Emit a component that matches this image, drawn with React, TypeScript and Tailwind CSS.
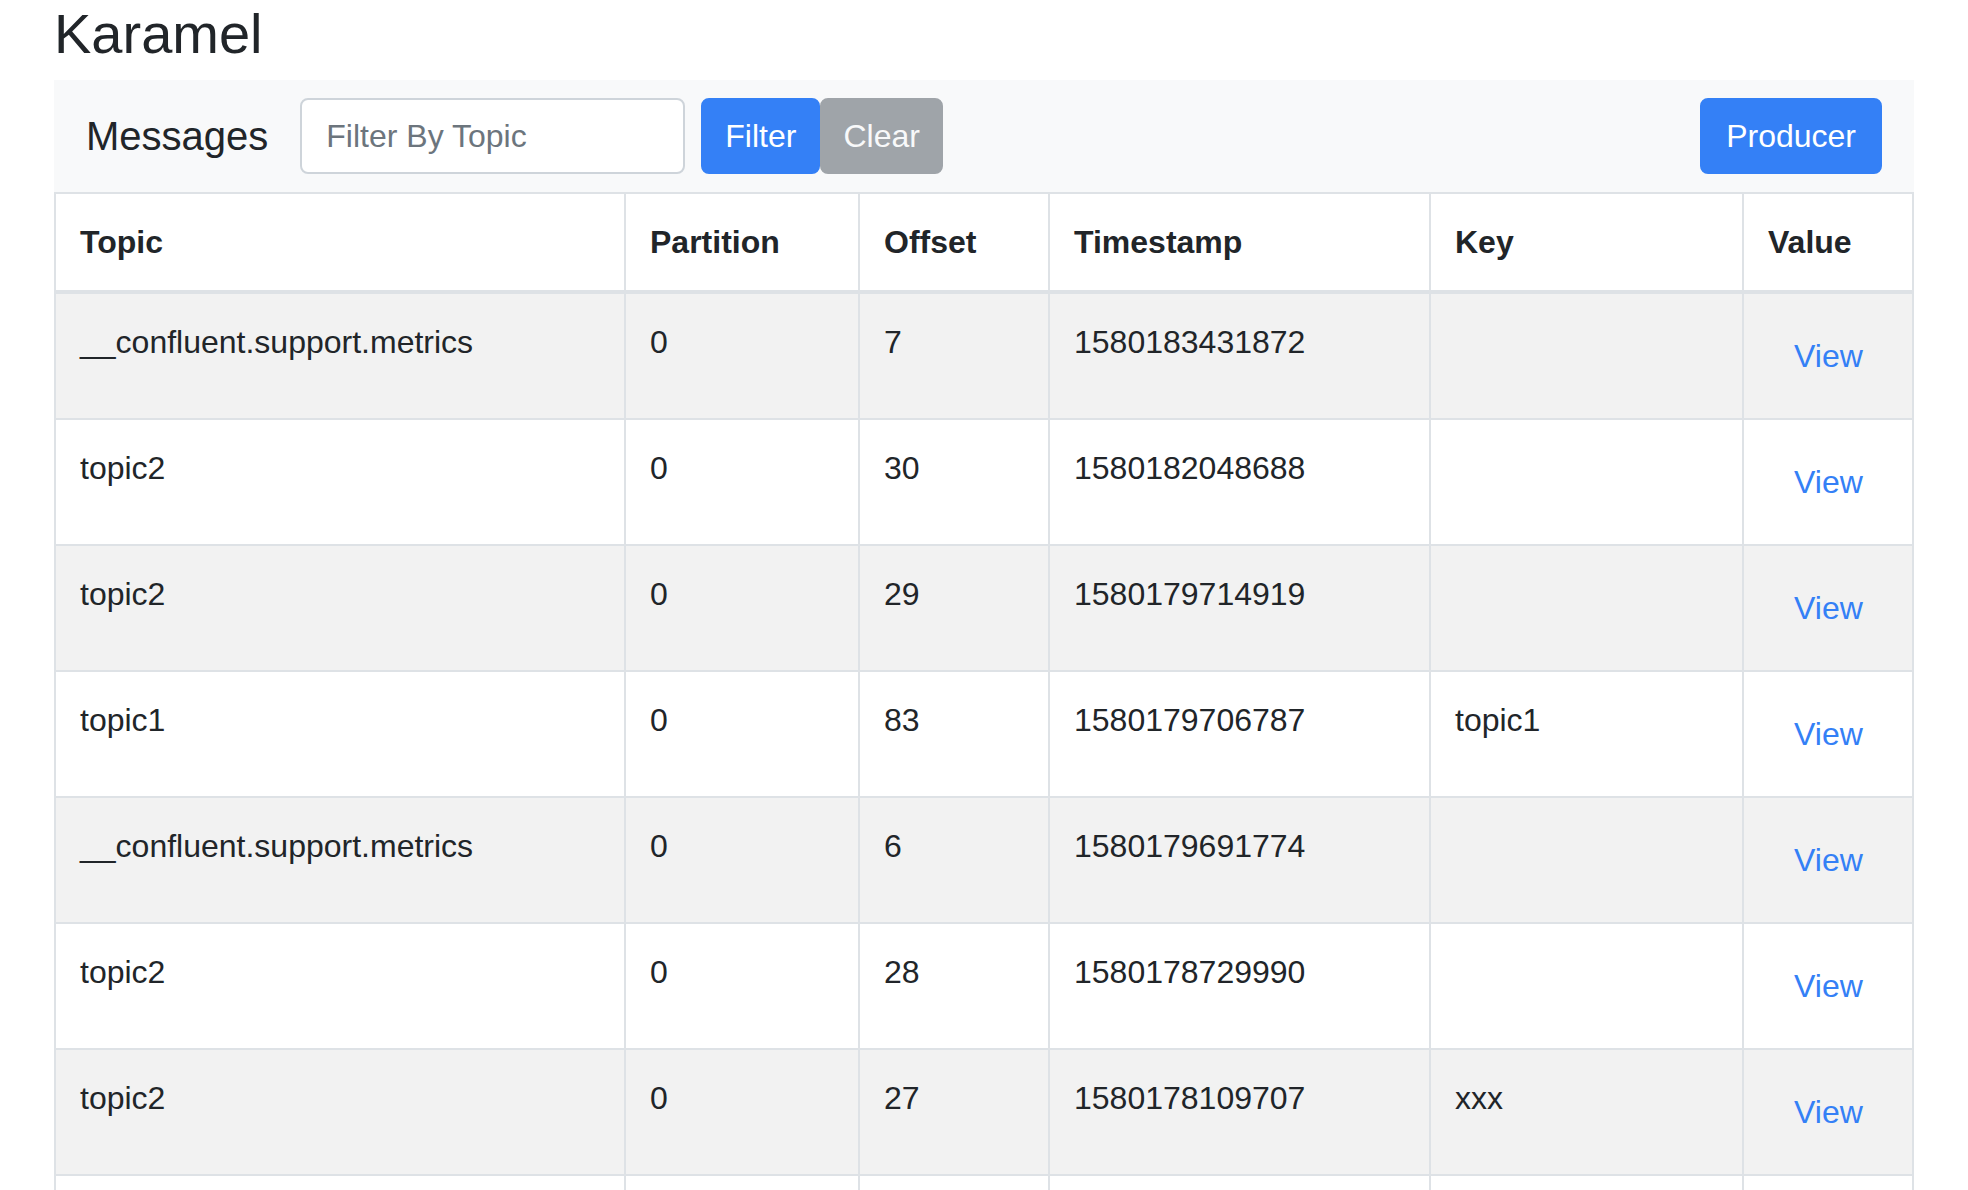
import React from 'react';

type Message = {
    topic: string;
    partition: string;
    offset: string;
    timestamp: string;
    key: string;
};

const messages: Message[] = [
    { topic: '__confluent.support.metrics', partition: '0', offset: '7', timestamp: '1580183431872', key: '' },
    { topic: 'topic2', partition: '0', offset: '30', timestamp: '1580182048688', key: '' },
    { topic: 'topic2', partition: '0', offset: '29', timestamp: '1580179714919', key: '' },
    { topic: 'topic1', partition: '0', offset: '83', timestamp: '1580179706787', key: 'topic1' },
    { topic: '__confluent.support.metrics', partition: '0', offset: '6', timestamp: '1580179691774', key: '' },
    { topic: 'topic2', partition: '0', offset: '28', timestamp: '1580178729990', key: '' },
    { topic: 'topic2', partition: '0', offset: '27', timestamp: '1580178109707', key: 'xxx' },
];

const headers = [
    { label: 'Topic', width: 'w-[570px]' },
    { label: 'Partition', width: 'w-[234px]' },
    { label: 'Offset', width: 'w-[190px]' },
    { label: 'Timestamp', width: 'w-[381px]' },
    { label: 'Key', width: 'w-[313px]' },
    { label: 'Value', width: '' },
];

const Cell = ({ children }: { children?: React.ReactNode }) => (
    <td className="px-[24px] py-[24px] border-2 border-[#dee2e6] align-top">{children}</td>
);

const App = () => {
    return (
        <div className="min-h-screen bg-white text-[#212529] font-['Liberation_Sans',Arial,sans-serif]">
            <div className="mx-[54px]">
                <h3 className="text-[56px] leading-[67px] font-medium mb-[13px]">Karamel</h3>

                <nav className="flex items-center h-[112px] px-[32px] bg-[#f8f9fa]">
                    <span className="text-[40px] leading-[60px] mr-[32px]">Messages</span>
                    <input
                        type="text"
                        placeholder="Filter By Topic"
                        className="w-[385px] h-[76px] px-[24px] mr-[16px] text-[32px] bg-white border-2 border-[#ced4da] rounded-[8px] outline-none placeholder:text-[#6c757d]"
                    />
                    <button className="h-[76px] px-[22px] text-[32px] text-white bg-[#3480f6] border-2 border-[#3480f6] rounded-[8px]">
                        Filter
                    </button>
                    <button className="h-[76px] px-[21px] text-[32px] text-[#f8f9fa] bg-[#9fa4a9] border-2 border-[#9fa4a9] rounded-[8px]">
                        Clear
                    </button>
                    <button className="ml-auto h-[76px] px-[24px] text-[32px] text-white bg-[#3480f6] border-2 border-[#3480f6] rounded-[8px]">
                        Producer
                    </button>
                </nav>

                <table className="w-full table-fixed border-collapse border-2 border-[#dee2e6] text-[32px] leading-[48px]">
                    <thead>
                        <tr>
                            {headers.map((h) => (
                                <th
                                    key={h.label}
                                    className={`${h.width} px-[24px] py-[24px] text-left font-bold align-bottom border-2 border-b-4 border-[#dee2e6]`}
                                >
                                    {h.label}
                                </th>
                            ))}
                        </tr>
                    </thead>
                    <tbody>
                        {messages.map((m, index) => (
                            <tr key={index} className={index % 2 === 0 ? 'bg-[#f2f2f2]' : 'bg-white'}>
                                <Cell>{m.topic}</Cell>
                                <Cell>{m.partition}</Cell>
                                <Cell>{m.offset}</Cell>
                                <Cell>{m.timestamp}</Cell>
                                <Cell>{m.key}</Cell>
                                <Cell>
                                    <button className="inline-block px-[24px] py-[12px] border-2 border-transparent text-[#3480f6] leading-[48px]">
                                        View
                                    </button>
                                </Cell>
                            </tr>
                        ))}
                        <tr className="bg-white h-[124px]">
                            <Cell />
                            <Cell />
                            <Cell />
                            <Cell />
                            <Cell />
                            <Cell />
                        </tr>
                    </tbody>
                </table>
            </div>
        </div>
    );
};

export default App;
